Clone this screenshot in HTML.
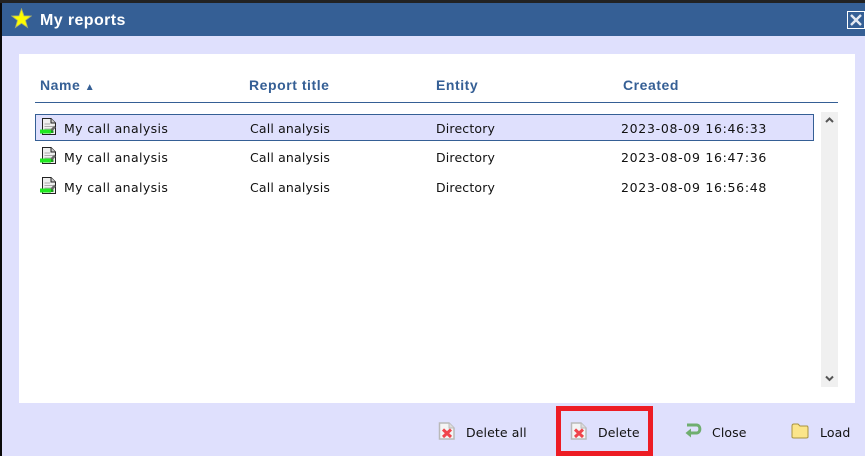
<!DOCTYPE html>
<html><head><meta charset="utf-8"><style>
html,body{margin:0;padding:0;width:865px;height:456px;overflow:hidden;background:#dfe0fd}
div,span,svg{position:absolute}
.t{font:12.5px "DejaVu Sans",sans-serif;color:#111;white-space:nowrap;line-height:16px;letter-spacing:.1px}
.n{letter-spacing:.38px}
.c{letter-spacing:.16px}
.d{letter-spacing:.7px}
.h{font:bold 14px "Liberation Sans",sans-serif;color:#355f95;white-space:nowrap;line-height:16px;letter-spacing:.55px}
</style></head><body>
<svg width="0" height="0" style="left:0;top:0"><defs>
<symbol id="doc" viewBox="0 0 18 18"><path d="M2.500 .5H11L15.500 5V16.500H2.500Z" fill="#efefef" stroke="#222"/><path d="M11 .5V5H15.500" fill="#ccc" stroke="#222"/><path d="M4.500 6H10M4.500 8.500H13M4.500 11H13" stroke="#aaa"/><path d="M9 15L15 8.500" stroke="#666" stroke-width="2.500"/><path d="M0 11.500H11V15.500H0Z" fill="#1fe81f"/><path d="M11 12.500h2.500v2.500h-2.500z" fill="#179a17"/></symbol>
<symbol id="del" viewBox="0 0 18 18"><path d="M1.500 1H11L16 6V17H1.500Z" fill="#f4f4f4" stroke="#b9b9b9" stroke-width="1.500"/><path d="M11 1V6H16" fill="#ddd" stroke="#bbb"/><path d="M5 7.500L13 15M13 7.500L5 15" stroke="#f0444c" stroke-width="3"/></symbol>
</defs></svg>
<div style="left:0;top:0;width:865px;height:3px;background:#222"></div>
<div style="left:0;top:3px;width:2px;height:453px;background:#0a0a0a"></div>
<div style="left:2px;top:3px;width:863px;height:33px;background:#355f95"></div>
<svg style="left:11px;top:8px" width="21" height="21" viewBox="0 0 21 21"><path d="M10.500 .8L13 7.800L20.300 8L14.500 12.400L16.600 19.500L10.500 15.300L4.400 19.500L6.500 12.400L.7 8L8 7.800Z" fill="#fdfd00" stroke="#a9b06a" stroke-width=".8"/></svg>
<div style="left:40px;top:11px;font:bold 16px/20px 'Liberation Sans',sans-serif;color:#fff;white-space:nowrap;letter-spacing:.4px">My reports</div>
<div style="left:847px;top:11px;width:16px;height:16px;border:1px solid #fff;box-sizing:content-box"></div>
<svg style="left:848px;top:12px" width="16" height="16" viewBox="0 0 16 16"><path d="M3 3L13 13M13 3L3 13" stroke="#e4e9f2" stroke-width="2.400"/></svg>
<div style="left:19px;top:54px;width:836px;height:349px;background:#fff"></div>
<div class="h" style="left:40px;top:77px">Name <span style="position:static;font-size:10px;letter-spacing:0">▲</span></div>
<div class="h" style="left:249px;top:77px">Report title</div>
<div class="h" style="left:436px;top:77px">Entity</div>
<div class="h" style="left:623px;top:77px">Created</div>
<div style="left:35px;top:102px;width:803px;height:1px;background:#355f95"></div>
<div style="left:35px;top:114px;width:779px;height:27px;box-sizing:border-box;background:#dfe0fd;border:1px solid #355f95"></div>
<svg style="left:40px;top:118px" width="18" height="18"><use href="#doc"/></svg>
<svg style="left:40px;top:147px" width="18" height="18"><use href="#doc"/></svg>
<svg style="left:40px;top:177px" width="18" height="18"><use href="#doc"/></svg>
<div class="t n" style="left:64px;top:121px">My call analysis</div>
<div class="t c" style="left:250px;top:121px">Call analysis</div>
<div class="t c" style="left:436px;top:121px">Directory</div>
<div class="t d" style="left:621px;top:121px">2023-08-09 16:46:33</div>
<div class="t n" style="left:64px;top:150px">My call analysis</div>
<div class="t c" style="left:250px;top:150px">Call analysis</div>
<div class="t c" style="left:436px;top:150px">Directory</div>
<div class="t d" style="left:621px;top:150px">2023-08-09 16:47:36</div>
<div class="t n" style="left:64px;top:180px">My call analysis</div>
<div class="t c" style="left:250px;top:180px">Call analysis</div>
<div class="t c" style="left:436px;top:180px">Directory</div>
<div class="t d" style="left:621px;top:180px">2023-08-09 16:56:48</div>
<div style="left:821px;top:112px;width:17px;height:275px;background:#f0f0f0"></div>
<svg style="left:821px;top:112px" width="17" height="17"><path d="M5 10L8.500 6.500L12 10" fill="none" stroke="#555" stroke-width="2"/></svg>
<svg style="left:821px;top:370px" width="17" height="17"><path d="M5 6.500L8.500 10L12 6.500" fill="none" stroke="#555" stroke-width="2"/></svg>
<svg style="left:438px;top:422px" width="18" height="18"><use href="#del"/></svg>
<div class="t" style="left:466px;top:425px">Delete all</div>
<svg style="left:570px;top:422px" width="18" height="18"><use href="#del"/></svg>
<div class="t" style="left:598px;top:425px">Delete</div>
<svg style="left:684px;top:422px" width="18" height="17" viewBox="0 0 18 17"><path d="M3 3H12.500C17 3 17 11 12.500 11H5" fill="none" stroke="#6fae6f" stroke-width="3"/><path d="M7 6.500L1.500 11L7 15.500Z" fill="#6fae6f"/></svg>
<div class="t" style="left:712px;top:425px">Close</div>
<svg style="left:791px;top:423px" width="18" height="16" viewBox="0 0 18 16"><path d="M1 3C1 1.500 2 1 3 1H7L9 3H16C17 3 17 4 17 5V14C17 15 16 15 15 15H3C2 15 1 15 1 14Z" fill="#fbe58a" stroke="#a89340"/></svg>
<div class="t" style="left:820px;top:425px">Load</div>
<div style="left:556px;top:406px;width:97px;height:50px;box-sizing:border-box;border:5px solid #ed1c24"></div>
</body></html>
